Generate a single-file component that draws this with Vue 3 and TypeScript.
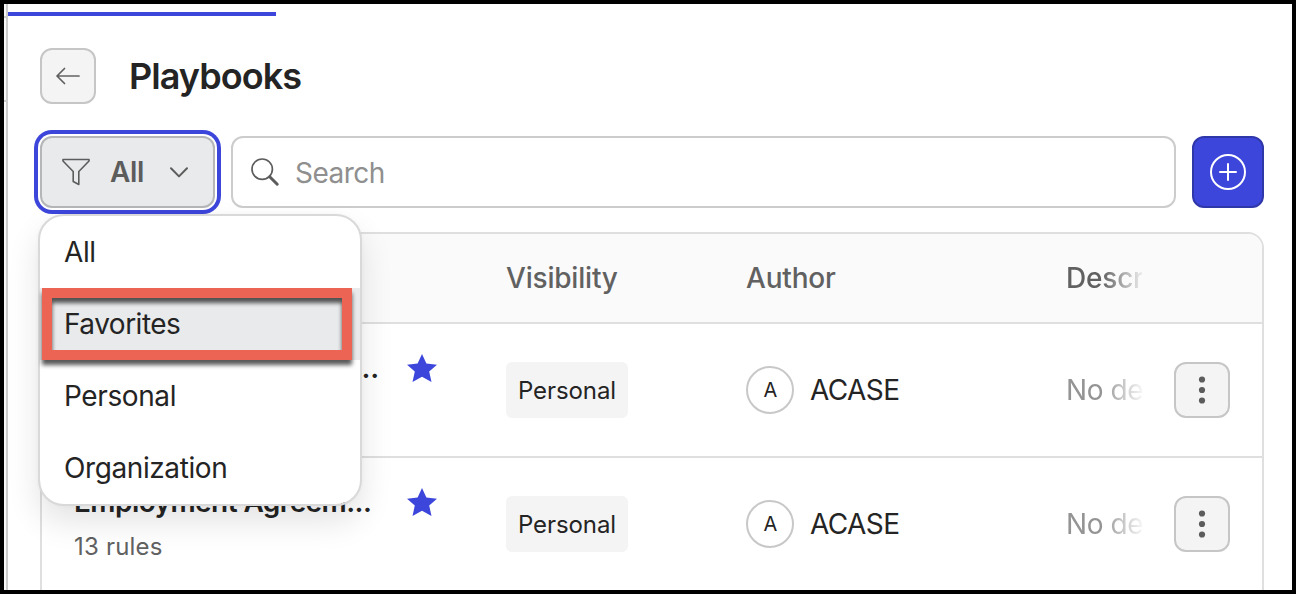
<script setup lang="ts">
import { ref } from 'vue'

interface Playbook {
  name: string
  rules: string
  visibility: string
  author: string
  description: string
}

const filters: string[] = ['All', 'Favorites', 'Personal', 'Organization']
const active = ref<string>('All')
const highlighted = ref<string>('Favorites')
const search = ref<string>('')

const playbooks: Playbook[] = [
  { name: '...', rules: '', visibility: 'Personal', author: 'ACASE', description: 'No de' },
  { name: 'Employment Agreem...', rules: '13 rules', visibility: 'Personal', author: 'ACASE', description: 'No de' },
]
</script>

<template>
  <div class="window">
    <div class="gutter"><i></i><i></i></div>
    <main class="pane">
      <div class="tabline"></div>
      <header class="heading">
        <button class="square" aria-label="Back">
          <svg width="52" height="52" viewBox="0 0 52 52" fill="none" stroke="#616161" stroke-width="1.7" stroke-linecap="round" stroke-linejoin="round">
            <path d="M37 26H15M22.500 18.500L15 26l7.500 7.500" />
          </svg>
        </button>
        <h1>Playbooks</h1>
      </header>

      <div class="toolbar">
        <div class="filter-wrap">
          <button class="filter">
            <svg class="funnel" width="28" height="28" viewBox="0 0 28 28" fill="none" stroke="#5c5c5c" stroke-width="1.6" stroke-linejoin="round">
              <path d="M1 1.500H27V3L16.800 13.500V26.500L11.200 23.500V13.500L1 3Z" />
            </svg>
            <span>{{ active }}</span>
            <svg class="chevron" width="20" height="12" viewBox="0 0 20 12" fill="none" stroke="#5c5c5c" stroke-width="2" stroke-linecap="round" stroke-linejoin="round">
              <path d="M2 2.200L10 10.400L18 2.200" />
            </svg>
          </button>
          <div class="menu">
            <div v-for="f in filters" :key="f" class="option" :class="{ hover: f === highlighted }">
              {{ f }}
              <div v-if="f === highlighted" class="marker"></div>
            </div>
          </div>
        </div>
        <label class="search">
          <svg width="30" height="30" viewBox="0 0 30 30" fill="none" stroke="#5c5c5c" stroke-linecap="round">
            <circle cx="12.200" cy="12.200" r="10.200" stroke-width="1.7" />
            <path d="M19.700 19.700L27.200 27.200" stroke-width="3" />
          </svg>
          <input v-model="search" placeholder="Search" />
        </label>
        <button class="add" aria-label="Add">
          <svg width="36" height="36" viewBox="0 0 36 36" fill="none" stroke="#fff" stroke-width="2" stroke-linecap="round">
            <circle cx="18" cy="18" r="17" />
            <path d="M10 18H26M18 10V26" />
          </svg>
        </button>
      </div>

      <section class="table">
        <div class="row head">
          <span class="c-name"></span>
          <span class="c-vis">Visibility</span>
          <span class="c-author">Author</span>
          <span class="c-desc">Descr</span>
        </div>
        <div v-for="(p, i) in playbooks" :key="i" class="row body">
          <div class="c-name">
            <div class="names">
              <div class="name" :class="{ tail: !p.rules }">{{ p.name }}</div>
              <div class="rules">{{ p.rules }}</div>
            </div>
            <svg class="star" width="30" height="28" viewBox="0 0 30 28" fill="#3d46db">
              <path d="M15 0L19.400 9.600L30 10.700L22.200 17.500L24.500 28L15 22.800L5.500 28L7.800 17.500L0 10.700L10.600 9.600Z" />
            </svg>
          </div>
          <div class="c-vis"><span class="badge">{{ p.visibility }}</span></div>
          <div class="c-author">
            <span class="avatar">{{ p.author.charAt(0) }}</span>
            <span>{{ p.author }}</span>
          </div>
          <div class="c-desc">{{ p.description }}</div>
          <button class="square more" aria-label="More">
            <svg width="52" height="52" viewBox="0 0 52 52" fill="#5c5c5c">
              <circle cx="26" cy="15.500" r="3.100" />
              <circle cx="26" cy="26" r="3.100" />
              <circle cx="26" cy="36.500" r="3.100" />
            </svg>
          </button>
        </div>
      </section>
    </main>
  </div>
</template>

<style>
body {
  margin: 0;
  overflow: hidden;
}
</style>

<style scoped>
* {
  box-sizing: border-box;
}
.window {
  display: flex;
  width: 1296px;
  height: 594px;
  border: 4px solid #000;
  overflow: hidden;
  background: #fff;
  color: #242424;
  font-family: Inter, "Liberation Sans", sans-serif;
  font-size: 28px;
  letter-spacing: -0.4px;
}
button {
  padding: 0;
  font: inherit;
  letter-spacing: inherit;
}
svg {
  display: block;
  flex: none;
}
.gutter {
  flex: none;
  width: 4px;
  border-right: 2px solid #ccc;
  background: #f8f8f8;
  padding-top: 12px;
}
.gutter i {
  display: block;
  height: 2px;
  background: #ccc;
  margin-bottom: 82px;
}
.pane {
  flex: 1;
  min-width: 0;
  padding: 8px 28px 0 32px;
}
.tabline {
  width: 268px;
  height: 4px;
  margin-left: -32px;
  background: #3d46db;
}
.heading {
  display: flex;
  align-items: center;
  height: 56px;
  margin-top: 32px;
}
.square {
  flex: none;
  width: 56px;
  height: 56px;
  border: 2px solid #c6c6c6;
  border-radius: 12px;
  background: #f4f4f4;
}
h1 {
  margin: 0 0 0 33px;
  font-size: 36px;
  font-weight: 600;
  letter-spacing: -0.95px;
}
.toolbar {
  display: flex;
  height: 72px;
  margin-top: 32px;
}
.filter-wrap {
  position: relative;
  z-index: 2;
  width: 175px;
  margin-right: 16px;
}
.filter {
  display: flex;
  align-items: center;
  width: 175px;
  height: 72px;
  padding-left: 20px;
  border: 2px solid #b5b6b7;
  border-radius: 12px;
  background: #e9eaeb;
  color: #5c5c5c;
  font-weight: 600;
  box-shadow: 0 0 0 2px #fff, 0 0 0 6px #3d46db;
}
.filter span {
  width: 34px;
  margin: 0 25px 0 20px;
  text-align: left;
}
.menu {
  position: absolute;
  left: -2px;
  top: 78px;
  width: 324px;
  height: 292px;
  border: 2px solid #d9d9d9;
  border-radius: 26px;
  background: #fff;
  background-clip: padding-box;
  box-shadow: 0 16px 32px rgba(0, 0, 0, 0.11), 0 0 4px rgba(0, 0, 0, 0.03);
}
.option {
  position: relative;
  height: 72px;
  padding-left: 24px;
  line-height: 73px;
}
.option.hover {
  background: #e9eaeb;
  letter-spacing: -0.5px;
}
.marker {
  position: absolute;
  left: 2px;
  top: 0;
  width: 310px;
  height: 72px;
  border: 10px solid #ec6453;
  filter: drop-shadow(0 5px 2px rgba(0, 0, 0, 0.65));
}
.search {
  display: flex;
  align-items: center;
  width: 945px;
  margin-right: 16px;
  padding-left: 17px;
  border: 2px solid #ccc;
  border-radius: 12px;
}
.search input {
  flex: 1;
  min-width: 0;
  margin-left: 15px;
  padding: 2px 0 0;
  border: 0;
  outline: 0;
  background: none;
  color: #242424;
  font: inherit;
  letter-spacing: -0.5px;
}
.search input::placeholder {
  color: #8f8f8f;
}
.add {
  display: flex;
  align-items: center;
  justify-content: center;
  width: 72px;
  border: 2px solid #2f38ab;
  border-radius: 12px;
  background: #3d46db;
}
.table {
  width: 1224px;
  height: 400px;
  margin-top: 24px;
  border: 2px solid #dfdfdf;
  border-radius: 16px;
  overflow: hidden;
}
.row {
  display: flex;
  align-items: center;
  border-bottom: 2px solid #dfdfdf;
  padding-left: 32px;
}
.head {
  height: 90px;
  background: #fafafa;
  color: #616161;
  font-weight: 500;
  letter-spacing: -0.2px;
}
.body {
  height: 134px;
}
.c-name {
  display: flex;
  flex: none;
  width: 432px;
}
.names {
  width: 305px;
  margin-right: 28px;
}
.name {
  margin-top: -3px;
  font-weight: 600;
  letter-spacing: -0.58px;
  line-height: 40px;
  white-space: nowrap;
}
.name.tail {
  text-align: right;
  letter-spacing: -0.2px;
}
.rules {
  height: 32px;
  margin-top: 9px;
  color: #616161;
  font-size: 24px;
  line-height: 32px;
  letter-spacing: 0.2px;
}
.star {
  margin-top: 3px;
}
.c-vis {
  flex: none;
  width: 240px;
}
.badge {
  display: inline-flex;
  align-items: center;
  justify-content: center;
  width: 122px;
  height: 56px;
  border-radius: 6px;
  background: #f4f4f4;
  font-size: 24px;
  letter-spacing: -0.1px;
  vertical-align: top;
}
.c-author {
  display: flex;
  align-items: center;
  flex: none;
  width: 320px;
}
.avatar {
  display: flex;
  align-items: center;
  justify-content: center;
  width: 48px;
  height: 48px;
  margin-right: 16px;
  border: 2px solid #c8c8c8;
  border-radius: 50%;
  font-size: 20px;
}
.body .c-author {
  letter-spacing: -0.6px;
}
.c-desc {
  flex: none;
  width: 76px;
  white-space: nowrap;
  color: #949494;
  mask-image: linear-gradient(90deg, #000 36px, transparent 80px);
}
.head .c-desc {
  color: #616161;
}
.more {
  margin-left: 32px;
}
</style>
